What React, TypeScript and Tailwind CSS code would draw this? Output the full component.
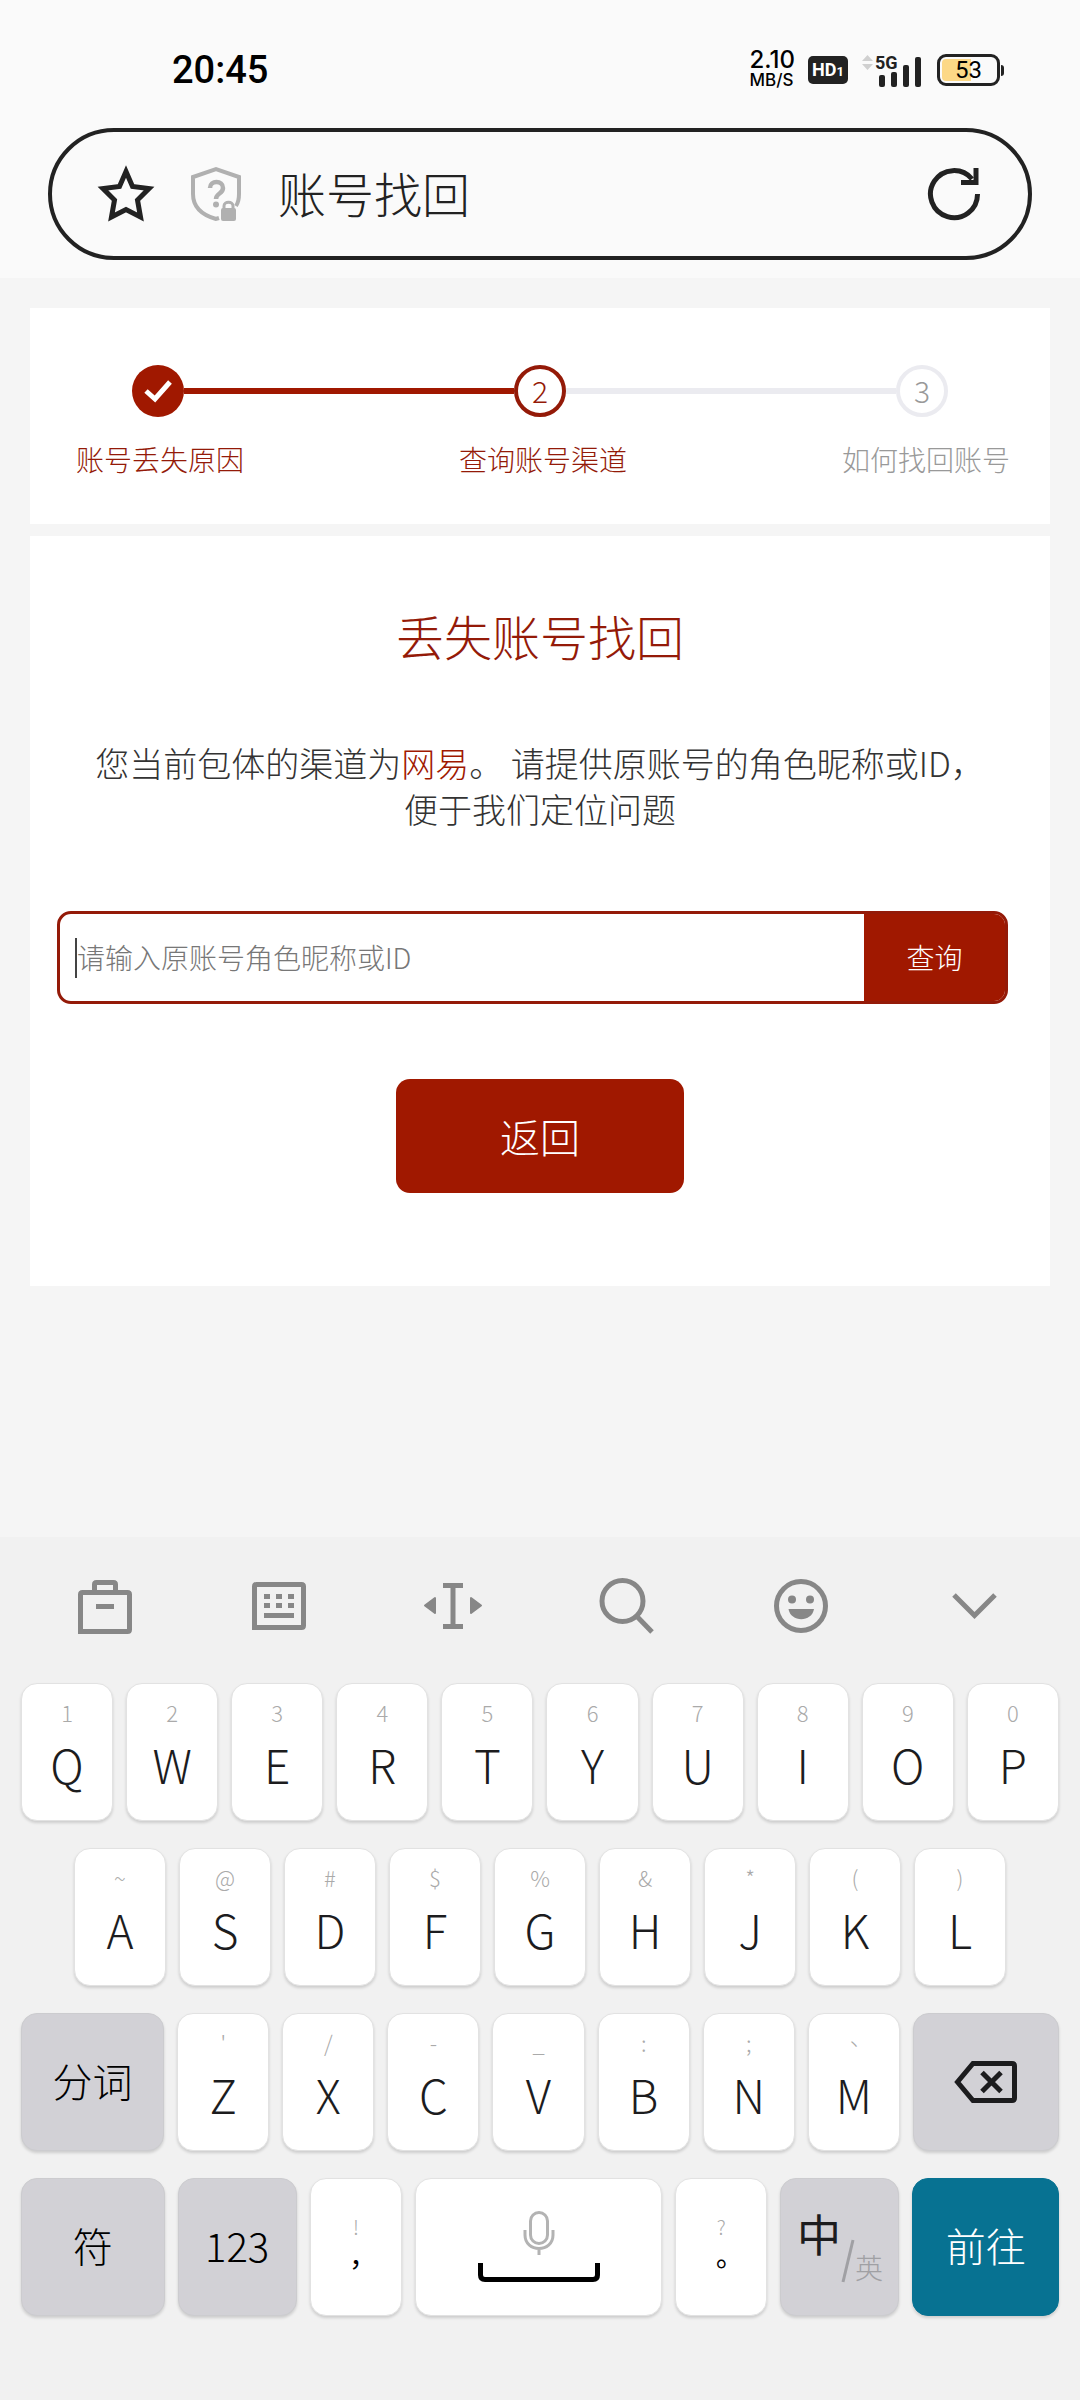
import type { ReactNode } from "react";
import { clsx } from "clsx";

interface KeyDef {
  hint: string;
  label: string;
}

const ROW_1: KeyDef[] = [
  { hint: "1", label: "Q" },
  { hint: "2", label: "W" },
  { hint: "3", label: "E" },
  { hint: "4", label: "R" },
  { hint: "5", label: "T" },
  { hint: "6", label: "Y" },
  { hint: "7", label: "U" },
  { hint: "8", label: "I" },
  { hint: "9", label: "O" },
  { hint: "0", label: "P" },
];

const ROW_2: KeyDef[] = [
  { hint: "~", label: "A" },
  { hint: "@", label: "S" },
  { hint: "#", label: "D" },
  { hint: "$", label: "F" },
  { hint: "%", label: "G" },
  { hint: "&", label: "H" },
  { hint: "*", label: "J" },
  { hint: "(", label: "K" },
  { hint: ")", label: "L" },
];

const ROW_3: KeyDef[] = [
  { hint: "'", label: "Z" },
  { hint: "/", label: "X" },
  { hint: "-", label: "C" },
  { hint: "_", label: "V" },
  { hint: ":", label: "B" },
  { hint: ";", label: "N" },
  { hint: "、", label: "M" },
];

/* ---------- status bar ---------- */

function SignalIcon() {
  return (
    <svg width="60" height="34" viewBox="0 0 60 34" className="shrink-0">
      <path d="M6.500 2 L12 8 H1 Z M6.500 17 L12 11 H1 Z" fill="#d0d0d0" />
      <text x="14" y="16" fontSize="18" className="font-['Roboto'] font-bold" fill="#222">5G</text>
      <g fill="#222">
        <rect x="18" y="22" width="6" height="12" rx="2" />
        <rect x="30" y="19" width="6" height="15" rx="2" />
        <rect x="42" y="12" width="6" height="22" rx="2" />
        <rect x="54" y="4" width="6" height="30" rx="2" />
      </g>
    </svg>
  );
}

function StatusBar() {
  return (
    <div className="flex h-32 items-center justify-between pt-3 pr-[76px] pl-[172px] font-['Roboto'] text-black">
      <span className="text-[38px] font-medium">20:45</span>
      <div className="flex items-center">
        <div className="mr-[13px] flex flex-col font-['Inter'] font-medium">
          <span className="text-[24px] leading-5">2.10</span>
          <span className="text-[17px] leading-5">MB/S</span>
        </div>
        <div className="mr-[13px] flex h-7 w-10 items-baseline justify-center rounded-[5px] bg-[#222] font-bold text-white">
          <span className="text-[18px] leading-7">HD</span>
          <span className="text-[13px]">1</span>
        </div>
        <SignalIcon />
        <div className="ml-4 flex items-center">
          <div className="relative flex h-8 w-[63px] items-center justify-center rounded-[9px] border-[3px] border-[#222]">
            <span className="absolute inset-y-[2px] left-[2px] w-[29px] rounded-l-[4px] bg-[#fcd886]" />
            <span className="relative text-[24px] leading-6">53</span>
          </div>
          <span className="ml-px h-[11px] w-[3px] rounded-r bg-[#222]" />
        </div>
      </div>
    </div>
  );
}

/* ---------- address bar ---------- */

function AddressBar() {
  return (
    <div className="mx-12 flex h-[132px] items-center rounded-full border-4 border-[#222] pr-[46px] pl-[42px]">
      <button type="button" aria-label="收藏" className="shrink-0">
        <svg width="64" height="64" viewBox="0 0 64 64" fill="none" stroke="#222" strokeWidth="5">
          <path d="M32 9.500 L38.500 24.500 L55 26.500 L43.500 38 L46.500 55 L32 47.500 L17.500 55 L20.500 38 L9 26.500 L25.500 24.500 Z" />
        </svg>
      </button>
      <button type="button" aria-label="网站安全" className="ml-7 shrink-0">
        <svg width="60" height="60" viewBox="0 0 60 60" fill="none" stroke="#b0b0b0" strokeWidth="4">
          <path d="M33 54 L30 55 C16 51 7 43 7 30 V13 L30 5 L53 13 V30 C53 35 52 39 50 42" />
          <path d="M24 24 C24 16 37 16 37 24 C37 30 30 29 30 35" strokeWidth="4.500" />
          <circle cx="30" cy="40.500" r="3" fill="#b0b0b0" stroke="none" />
          <rect x="35" y="44" width="15" height="13" rx="2" fill="#b0b0b0" stroke="none" />
          <path d="M38 45 V42 C38 37 47 37 47 42 V45" strokeWidth="3" />
        </svg>
      </button>
      <input
        type="text"
        aria-label="地址栏"
        defaultValue="账号找回"
        className="ml-8 min-w-0 flex-1 bg-transparent pb-1 text-[48px] font-light text-[#222] outline-none"
      />
      <button type="button" aria-label="刷新" className="shrink-0">
        <svg width="56" height="56" viewBox="0 0 56 56" fill="none" stroke="#222" strokeWidth="5">
          <path d="M51.500 28 A23.500 23.500 0 1 1 46 13" />
          <path d="M50 2 V16.500 H35" />
        </svg>
      </button>
    </div>
  );
}

/* ---------- page content ---------- */

function Stepper() {
  return (
    <section className="bg-white pt-[57px] pb-[45px]">
      <div className="flex items-center px-[102px]">
        <span className="flex size-[52px] shrink-0 items-center justify-center rounded-full bg-[#a01800]">
          <svg width="32" height="28" viewBox="0 0 32 28" fill="none" stroke="#fff" strokeWidth="5">
            <path d="M4 14 L13 22 L28 5" />
          </svg>
        </span>
        <span className="h-[6px] flex-1 bg-[#a01800]" />
        <span className="flex size-[52px] shrink-0 items-center justify-center rounded-full border-4 border-[#941a08] pb-[2px] text-[30px] font-light text-[#941a08]">
          2
        </span>
        <span className="h-[6px] flex-1 bg-[#ebebf0]" />
        <span className="flex size-[52px] shrink-0 items-center justify-center rounded-full border-4 border-[#ebebf0] pb-[2px] text-[30px] font-light text-[#999]">
          3
        </span>
      </div>
      <div className="mt-[22px] flex justify-between pr-10 pl-[46px] text-[28px] leading-10 font-light text-[#941a08]">
        <span>账号丢失原因</span>
        <span>查询账号渠道</span>
        <span className="text-[#999]">如何找回账号</span>
      </div>
    </section>
  );
}

function RecoverForm() {
  return (
    <section className="mt-3 bg-white pt-[67px] pb-[93px] text-center">
      <h1 className="text-[48px] leading-[64px] font-light text-[#941a08]">丢失账号找回</h1>
      <p className="mt-[73px] text-[34px] leading-[46px] font-light text-[#333]">
        您当前包体的渠道为<span className="text-[#a01800]">网易</span>。 请提供原账号的角色昵称或ID，
        <br />
        便于我们定位问题
      </p>
      <form
        className="mt-[79px] mr-[42px] ml-[27px] flex h-[93px] overflow-hidden rounded-[14px] border-[3px] border-[#941a08]"
        onSubmit={e => e.preventDefault()}
      >
        <div className="flex min-w-0 flex-1 items-center pl-[15px]">
          <span className="h-10 w-[2px] bg-[#444]" />
          <input
            type="text"
            aria-label="原账号角色昵称或ID"
            placeholder="请输入原账号角色昵称或ID"
            className="min-w-0 flex-1 pb-[2px] text-[28px] font-light outline-none placeholder:text-[#777]"
          />
        </div>
        <button type="submit" className="w-[141px] bg-[#a01800] pb-[2px] text-[28px] font-light text-white">
          查询
        </button>
      </form>
      <button
        type="button"
        className="mt-[75px] h-[114px] w-72 rounded-[14px] bg-[#a01800] text-[40px] font-light text-white"
      >
        返回
      </button>
    </section>
  );
}

/* ---------- keyboard ---------- */

function ToolButton({ label, children }: { label: string; children: ReactNode }) {
  return (
    <button type="button" aria-label={label} className="flex flex-1 items-center justify-center">
      <svg width="60" height="60" viewBox="0 0 60 60" fill="none" stroke="#878787" strokeWidth="5">
        {children}
      </svg>
    </button>
  );
}

function Toolbar() {
  return (
    <div className="flex h-[136px] px-[18px]">
      <ToolButton label="工具箱">
        <path d="M5.500 56.500 V19.500 Q5.500 17.500 7.500 17.500 H52.500 Q54.500 17.500 54.500 19.500 V54.500 Q54.500 56.500 52.500 56.500 Z" />
        <path d="M19.500 17 V9.500 Q19.500 7.500 21.500 7.500 H38.500 Q40.500 7.500 40.500 9.500 V17 M21 31.500 H39" />
      </ToolButton>
      <ToolButton label="键盘">
        <path d="M5.500 52.500 V11.500 Q5.500 9.500 7.500 9.500 H52.500 Q54.500 9.500 54.500 11.500 V50.500 Q54.500 52.500 52.500 52.500 Z" />
        <path d="M15 21.500 H45 M15 30.500 H45" strokeDasharray="6 6" />
        <path d="M15 40.500 H45" />
      </ToolButton>
      <ToolButton label="光标">
        <path d="M20 10.500 H40 M20 51.500 H40 M30 10 V52" />
        <path d="M2 30.500 L12 23 V38 Z M58 30.500 L48 23 V38 Z" fill="#878787" strokeWidth="2" strokeLinejoin="round" />
      </ToolButton>
      <ToolButton label="搜索">
        <circle cx="25.500" cy="26" r="20.500" />
        <path d="M39.500 41 L55 57" />
      </ToolButton>
      <ToolButton label="表情">
        <circle cx="30" cy="31" r="24.500" />
        <g fill="#878787" stroke="none">
          <circle cx="21" cy="24.500" r="4" />
          <circle cx="39" cy="24.500" r="4" />
          <path d="M17.500 34 H43 C41 47.500 19.500 47.500 17.500 34 Z" />
        </g>
      </ToolButton>
      <ToolButton label="收起键盘">
        <path d="M9 20 L29.500 40.500 L50 20" />
      </ToolButton>
    </div>
  );
}

const KEY = "h-[138px] min-w-0 rounded-2xl border shadow-[0_2px_3px_rgba(0,0,0,0.15)]";
const WHITE_KEY = "border-[#e2e2e2] bg-white";
const GRAY_KEY = "border-[#cccccf] bg-[#d2d1d6] text-[40px] font-light text-black";

function LetterKey({ hint, label }: KeyDef) {
  return (
    <button type="button" className={clsx(KEY, WHITE_KEY, "flex flex-[92] flex-col items-center pt-3")}>
      <span className="font-['Noto_Sans_CJK_TC'] text-[22px] leading-8 font-light text-[#aaa]">{hint}</span>
      <span className="mt-[6px] text-[46px] leading-[60px] font-light text-[#1c1c1e]">{label}</span>
    </button>
  );
}

function PunctuationKey({ hint, label }: KeyDef) {
  return (
    <button
      type="button"
      className={clsx(KEY, WHITE_KEY, "flex flex-[92] flex-col items-center pt-[33px] font-['Noto_Sans_CJK_TC']")}
    >
      <span className="text-[20px] leading-[30px] font-light text-[#aaa]">{hint}</span>
      <span className="text-[28px] leading-[42px] text-black">{label}</span>
    </button>
  );
}

function Keyboard() {
  return (
    <div className="bg-[#f1f1f1] pb-[84px]">
      <Toolbar />
      <div className="flex flex-col gap-[27px] px-[21px] pt-[10px]">
        <div className="flex gap-[13px]">
          {ROW_1.map(k => <LetterKey key={k.label} {...k} />)}
        </div>
        <div className="flex gap-[13px] px-[53px]">
          {ROW_2.map(k => <LetterKey key={k.label} {...k} />)}
        </div>
        <div className="flex gap-[13px]">
          <button type="button" className={clsx(KEY, GRAY_KEY, "flex-[144] pb-1")}>分词</button>
          {ROW_3.map(k => <LetterKey key={k.label} {...k} />)}
          <button type="button" aria-label="删除" className={clsx(KEY, GRAY_KEY, "flex flex-[147] items-center justify-center")}>
            <svg width="64" height="42" viewBox="0 0 64 42" fill="none" stroke="#1c1c1e" strokeWidth="5">
              <path d="M19 2.500 H58 Q60.500 2.500 60.500 5 V37 Q60.500 39.500 58 39.500 H19 L3.500 21 Z" />
              <path d="M28 11.500 L47 30.500 M47 11.500 L28 30.500" />
            </svg>
          </button>
        </div>
        <div className="flex gap-[13px]">
          <button type="button" className={clsx(KEY, GRAY_KEY, "flex-[144] pb-1")}>符</button>
          <button type="button" className={clsx(KEY, GRAY_KEY, "flex-[119] pb-1")}>123</button>
          <PunctuationKey hint="!" label="，" />
          <button type="button" aria-label="空格" className={clsx(KEY, WHITE_KEY, "flex flex-[249] items-center justify-center")}>
            <svg width="122" height="72" viewBox="0 0 122 72" fill="none">
              <g stroke="#b3b3b3" strokeWidth="3">
                <rect x="52.500" y="1.500" width="17" height="31" rx="8.500" />
                <path d="M47 19 V24 C47 42 75 42 75 24 V19 M61 38 V44" />
              </g>
              <path d="M2.500 52 V64 Q2.500 68.500 7 68.500 H115 Q119.500 68.500 119.500 64 V52" stroke="#000" strokeWidth="5" />
            </svg>
          </button>
          <PunctuationKey hint="?" label="。" />
          <button type="button" className={clsx(KEY, GRAY_KEY, "flex flex-[119] items-start justify-center pt-8")}>
            <span className="text-[44px] leading-[44px] font-normal text-[#1c1c1e]">中</span>
            <svg width="14" height="44" viewBox="0 0 14 44" stroke="#a0a0a4" strokeWidth="3" className="mt-7 shrink-0">
              <path d="M12 1 L2 43" />
            </svg>
            <span className="mt-[42px] text-[28px] leading-7 text-[#a0a0a4]">英</span>
          </button>
          <button type="button" className={clsx(KEY, "flex-[147] border-[#077292] bg-[#077292] pb-1 text-[40px] font-light text-white")}>
            前往
          </button>
        </div>
      </div>
    </div>
  );
}

export default function App() {
  return (
    <div className="flex min-h-screen flex-col bg-[#f5f5f5] font-['Noto_Sans_CJK_SC',sans-serif]">
      <header className="bg-[#fafafa] pb-[18px]">
        <StatusBar />
        <AddressBar />
      </header>
      <main className="flex-1 px-[30px] py-[30px]">
        <Stepper />
        <RecoverForm />
      </main>
      <Keyboard />
    </div>
  );
}
